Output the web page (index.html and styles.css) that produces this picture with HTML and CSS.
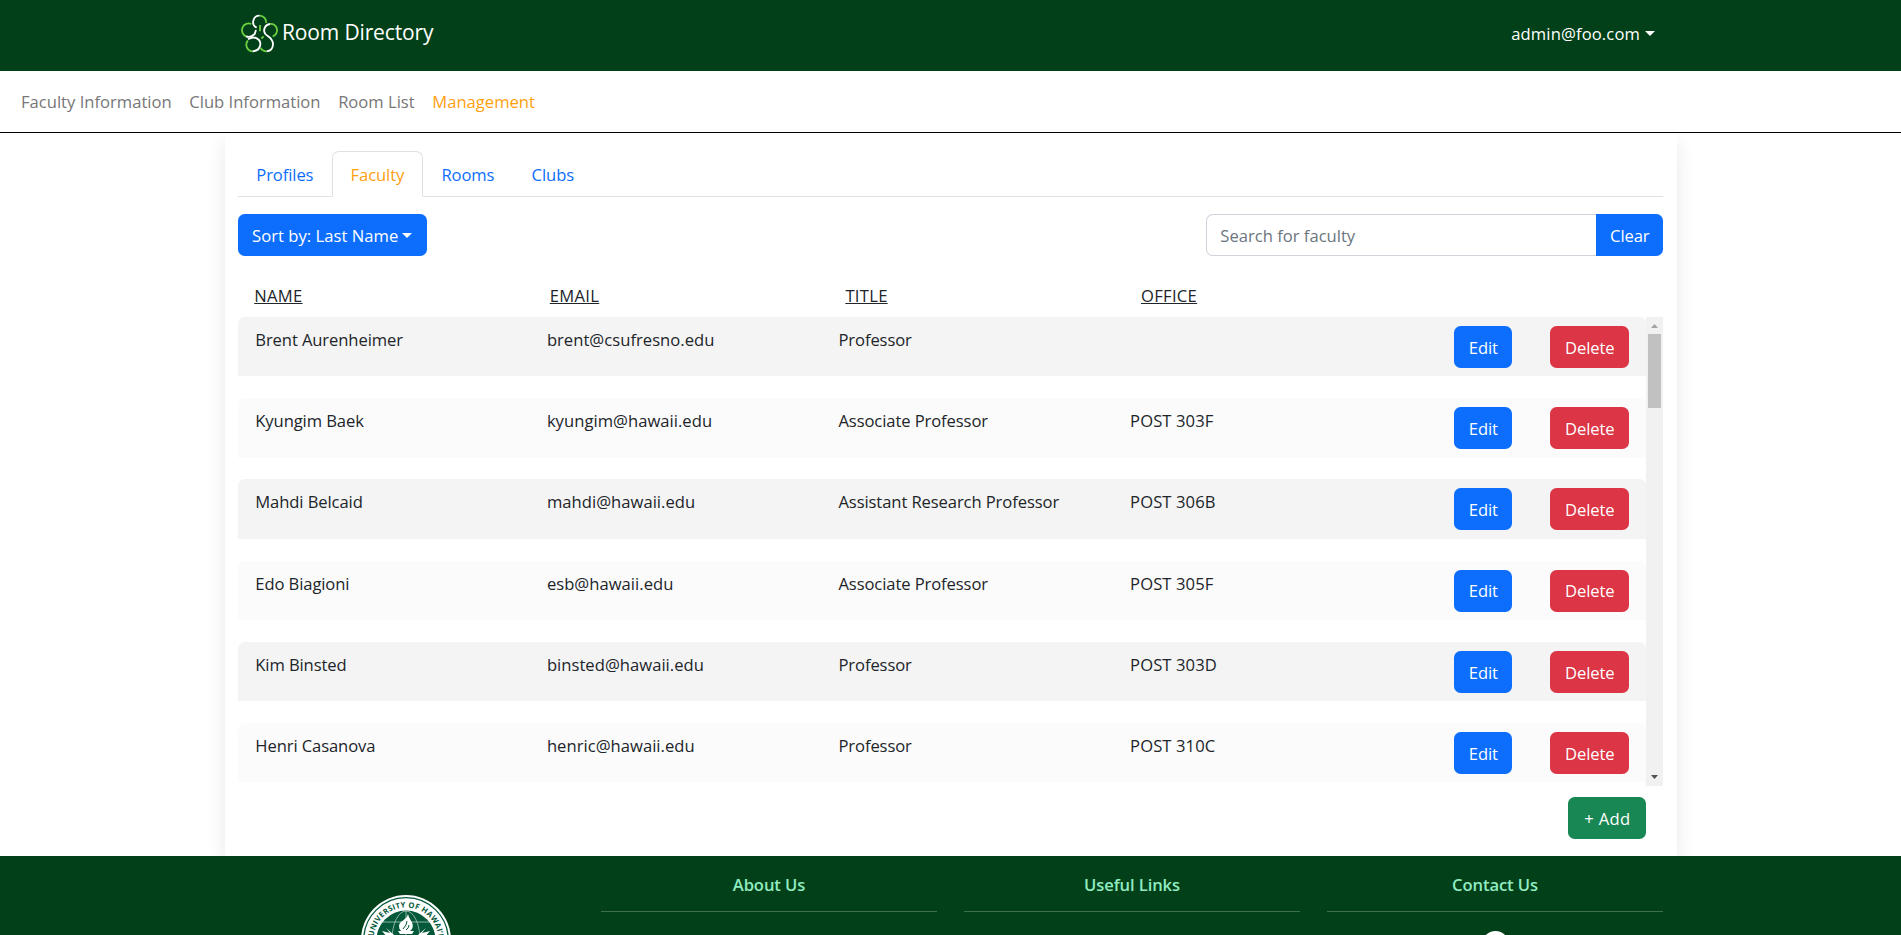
FILE: index.html
```html
<!DOCTYPE html>
<html lang="en">
<head>
<meta charset="utf-8">
<title>Room Directory</title>
<link rel="stylesheet" href="styles.css">
</head>
<body>
<header class="topbar">
  <a class="brand">
    <svg class="brand-logo" viewBox="60 40 120 120" fill="none" stroke-width="5.5">
      <g stroke="#6bcf3f">
        <path d="M119 48A19 19 0 0 1 138 70"/>
        <path d="M94 73A19 19 0 1 0 78 110"/>
        <path d="M150 73A19 19 0 0 1 158 110"/>
        <path d="M84 122A20 20 0 0 0 98 155"/>
        <path d="M122 145Q128 155 140 155"/>
        <path d="M120 76V95M131 110L124 117"/>
      </g>
      <g stroke="#fff">
        <path d="M119 48A19 19 0 0 0 110 84"/>
        <path d="M78 110Q92 115 104 103L108 91"/>
        <path d="M150 73A19 19 0 0 0 136 103C144 112 158 114 159 133Q159 153 140 155"/>
        <path d="M84 119C104 106 122 119 121 134Q120 152 98 155"/>
      </g>
    </svg>
    <span class="brand-name">Room Directory</span>
  </a>
  <a class="user">admin@foo.com<i class="caret"></i></a>
</header>
<nav class="mainnav">
  <a>Faculty Information</a><a>Club Information</a><a>Room List</a><a class="current">Management</a>
</nav>
<main class="card">
  <div class="tabs">
    <a class="tab">Profiles</a><a class="tab active">Faculty</a><a class="tab">Rooms</a><a class="tab">Clubs</a>
  </div>
  <div class="tools">
    <button class="btn blue sort">Sort by: Last Name<i class="caret"></i></button>
    <div class="search"><input type="text" placeholder="Search for faculty"><button class="btn blue clear">Clear</button></div>
  </div>
  <div class="heads"><span>NAME</span><span>EMAIL</span><span>TITLE</span><span>OFFICE</span></div>
  <div class="list">
    <div class="rows">
      <div class="row"><span>Brent Aurenheimer</span><span class="mail">brent@csufresno.edu</span><span>Professor</span><span class="office"></span><div class="actions"><button class="btn blue edit">Edit</button><button class="btn red">Delete</button></div></div>
      <div class="row"><span>Kyungim Baek</span><span class="mail">kyungim@hawaii.edu</span><span>Associate Professor</span><span class="office">POST 303F</span><div class="actions"><button class="btn blue edit">Edit</button><button class="btn red">Delete</button></div></div>
      <div class="row"><span>Mahdi Belcaid</span><span class="mail">mahdi@hawaii.edu</span><span>Assistant Research Professor</span><span class="office">POST 306B</span><div class="actions"><button class="btn blue edit">Edit</button><button class="btn red">Delete</button></div></div>
      <div class="row"><span>Edo Biagioni</span><span class="mail">esb@hawaii.edu</span><span>Associate Professor</span><span class="office">POST 305F</span><div class="actions"><button class="btn blue edit">Edit</button><button class="btn red">Delete</button></div></div>
      <div class="row"><span>Kim Binsted</span><span class="mail">binsted@hawaii.edu</span><span>Professor</span><span class="office">POST 303D</span><div class="actions"><button class="btn blue edit">Edit</button><button class="btn red">Delete</button></div></div>
      <div class="row"><span>Henri Casanova</span><span class="mail">henric@hawaii.edu</span><span>Professor</span><span class="office">POST 310C</span><div class="actions"><button class="btn blue edit">Edit</button><button class="btn red">Delete</button></div></div>
    </div>
    <div class="scrollbar">
      <svg class="arrow" viewBox="0 0 17 17"><path d="M5 11L8.5 7L12 11Z" fill="#a3a3a3"/></svg>
      <div class="thumb"></div>
      <svg class="arrow" viewBox="0 0 17 17"><path d="M5 6L8.5 10L12 6Z" fill="#505050"/></svg>
    </div>
  </div>
  <div class="add-line"><button class="btn green">+ Add</button></div>
</main>
<footer class="footer">
  <div class="seal-col">
    <svg class="seal" viewBox="0 0 90 90">
      <defs><path id="ring" d="M12.500 45A32.500 32.500 0 0 1 77.500 45"/></defs>
      <circle cx="45" cy="45" r="45" fill="#fff"/>
      <circle cx="45" cy="45" r="42.300" fill="none" stroke="#04593a" stroke-width="1.300"/>
      <circle cx="45" cy="45" r="29.500" fill="#04593a"/>
      <g fill="none" stroke="#c3d8cd" stroke-width=".7">
        <ellipse cx="45" cy="45" rx="14" ry="29"/><path d="M20 27H70M45 16V74"/>
      </g>
      <path d="M47 19C48 25 54 28 51 34Q49 37 45 37Q38 37 38 31C38 26 46 25 47 19Z" fill="#fff"/>
      <path d="M46 26Q46 30 42 34M48 30Q48 33 45 35" stroke="#04593a" fill="none"/>
      <path d="M37 36H53L51 39H39ZM41 40H49L47 70H43Z" fill="#fff"/>
      <path d="M40 46L25 33L29 38L21 36L26 42L17 42L34 54ZM50 46L65 33L61 38L69 36L64 42L73 42L56 54Z" fill="#fff"/>
      <text class="seal-text"><textPath href="#ring" startOffset="50%" text-anchor="middle">UNIVERSITY OF HAWAI‘I</textPath></text>
    </svg>
  </div>
  <section class="foot-col"><h2>About Us</h2></section>
  <section class="foot-col"><h2>Useful Links</h2></section>
  <section class="foot-col"><h2>Contact Us</h2><i class="contact-dot"></i></section>
</footer>
</body>
</html>
```
FILE: styles.css
```css
* { box-sizing: border-box; }
html, body { height: 100%; }
body {
  margin: 0;
  overflow: hidden;
  font-family: "Open Sans", "Noto Sans", sans-serif;
  font-size: 16.6px;
  line-height: 26.4px;
  letter-spacing: -0.1px;
  color: #212529;
  background: #fff;
}
.topbar {
  height: 71px;
  padding: 0 246px 0 240px;
  display: flex;
  justify-content: space-between;
  background: #024019;
  color: #fff;
}
.brand { display: flex; align-items: flex-start; padding-top: 13px; }
.brand-logo { width: 40px; height: 40px; }
.brand-name { font-size: 21px; line-height: 38px; margin-left: 2px; letter-spacing: -0.14px; }
.user { padding-top: 21px; letter-spacing: .12px; }
.caret {
  display: inline-block;
  margin-left: 5px;
  vertical-align: 4px;
  border: 5px solid transparent;
  border-top-color: currentColor;
  border-bottom: 0;
}
.mainnav {
  height: 62px;
  display: flex;
  gap: 17.600px;
  padding: 18px 21px 0;
  border-bottom: 1px solid #000;
  letter-spacing: 0;
  color: #777;
}
.mainnav .current { color: #ffa011; }
.card {
  width: 1452px;
  height: 723px;
  margin: 0 auto;
  padding: 18px 13.200px 0;
  box-shadow: 0 9px 18px rgba(0, 0, 0, .09);
}
.tabs { display: flex; height: 46px; border-bottom: 1px solid #dee2e6; }
.tab {
  height: 46px;
  padding: 10px 17.600px 0;
  border: 1px solid transparent;
  border-radius: 7px 7px 0 0;
  color: #0d6efd;
}
.tab.active { color: #ffa011; background: #fff; border-color: #dee2e6 #dee2e6 #fff; }
.tools { display: flex; justify-content: space-between; margin-top: 17px; }
.btn {
  height: 42px;
  padding: 2px 13px 0;
  border: 0;
  border-radius: 6.600px;
  font: inherit;
  letter-spacing: inherit;
  color: #fff;
  white-space: nowrap;
}
.blue { background: #0d6efd; }
.red { background: #dc3545; width: 79px; }
.green { background: #198754; width: 78px; letter-spacing: .3px; }
.edit { width: 58px; }
.sort { width: 189px; letter-spacing: .03px; }
.sort .caret { margin-left: 4px; }
.search { display: flex; width: 457px; }
.search input {
  flex: 1;
  min-width: 0;
  height: 42px;
  padding: 0 13px;
  border: 1px solid #ced4da;
  border-right: 0;
  border-radius: 6.600px 0 0 6.600px;
  font: inherit;
  letter-spacing: 0;
}
.search input::placeholder { color: #6c757d; opacity: 1; }
.clear { width: 67px; border-radius: 0 6.600px 6.600px 0; }
.heads {
  display: grid;
  grid-template-columns: repeat(4, 295.600px);
  padding: 27px 0 0 16.500px;
  height: 61px;
  letter-spacing: .3px;
  text-decoration: underline;
}
.list { display: flex; height: 469px; }
.rows { flex: 1; display: flex; flex-direction: column; gap: 21.800px; overflow: hidden; }
.row {
  flex: none;
  height: 59.400px;
  display: grid;
  grid-template-columns: repeat(4, 291.600px) 1fr;
  padding: 9px 17px 0 17.600px;
  border-radius: 6.600px 6.600px 0 0;
  background: #fbfbfb;
}
.row:nth-child(odd) { background: #f4f4f4; }
.row > span { padding-top: 1px; }
.row .mail { letter-spacing: .03px; }
.row .office { letter-spacing: .1px; }
.actions { display: flex; justify-content: flex-end; gap: 38px; }
.scrollbar { width: 17px; background: #f1f1f1; display: flex; flex-direction: column; }
.arrow { width: 17px; height: 17px; flex: none; }
.thumb { width: 13px; height: 74px; margin: 0 2px auto; background: #c1c1c1; }
.add-line { display: flex; justify-content: flex-end; padding: 11px 17px 0 0; }
.footer {
  height: 79px;
  overflow: hidden;
  display: grid;
  grid-template-columns: 336px 336px 336px 336px;
  column-gap: 27px;
  padding-left: 238px;
  background: #024019;
  position: relative;
}
.seal-col { display: flex; justify-content: center; padding-top: 39px; }
.seal { width: 90px; height: 90px; }
.seal-text { font: bold 7.700px "Open Sans", sans-serif; letter-spacing: .25px; fill: #04593a; }
.foot-col { text-align: center; }
.foot-col h2 {
  height: 56px;
  margin: 0;
  padding-top: 16px;
  border-bottom: 1px solid #3c7049;
  font-size: 16.600px;
  font-weight: 600;
  color: #90ecc0;
}
.contact-dot {
  display: block;
  width: 27px;
  height: 27px;
  margin: 19px auto 0;
  border-radius: 50%;
  background: #fff;
}
```
